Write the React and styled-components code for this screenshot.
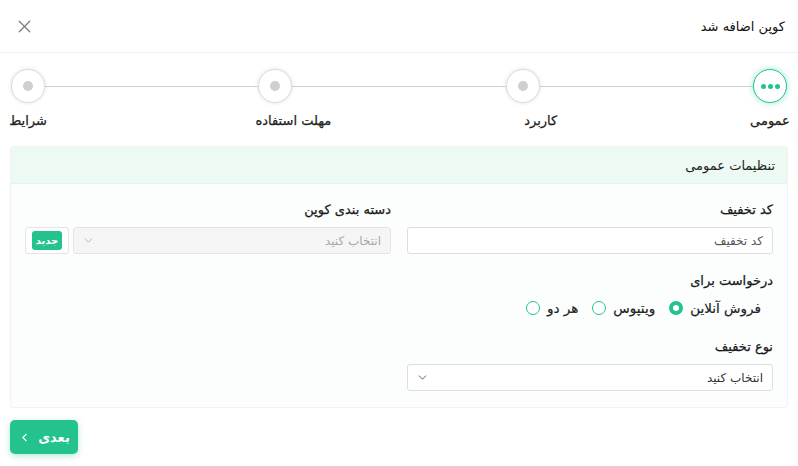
import React from "react";
import styled, { createGlobalStyle, css } from "styled-components";
import { X, ChevronDown, ChevronLeft } from "lucide-react";

const GREEN = "#24c38e";

const GlobalStyle = createGlobalStyle`
  * { box-sizing: border-box; }
  html, body {
    margin: 0;
    background: #fff;
    font-family: "DejaVu Sans", "Noto Sans", sans-serif;
    color: #222;
  }
`;

const Page = styled.div`
  direction: rtl;
  width: 798px;
  height: 466px;
  overflow: hidden;
`;

const Header = styled.header`
  display: flex;
  align-items: center;
  justify-content: space-between;
  height: 53px;
  padding: 0 13px 0 14px;
  border-bottom: 1px solid #f1f1f1;

  h1 {
    margin: 0;
    font-size: 13px;
    font-weight: 400;
    color: #111;
  }

  svg {
    color: #7a7a7a;
  }
`;

const Stepper = styled.div`
  display: flex;
  align-items: flex-start;
  padding: 16px 11px 0 11px;
  height: 93px;
`;

const Step = styled.div`
  display: flex;
  flex-direction: column;
  align-items: center;
  width: 34px;
  flex: none;
`;

const Circle = styled.div`
  width: 34px;
  height: 34px;
  border-radius: 50%;
  background: #fff;
  display: flex;
  align-items: center;
  justify-content: center;
  gap: 2px;
  border: 1px solid #dcdcdc;
  box-shadow: 0 0 4px rgba(0, 0, 0, 0.12);

  ${(p) =>
    p.$active &&
    css`
      border: 1.5px solid ${GREEN};
      box-shadow: 0 0 6px rgba(36, 195, 142, 0.45);
    `}
`;

const Dot = styled.span`
  width: ${(p) => (p.$small ? 5 : 10)}px;
  height: ${(p) => (p.$small ? 5 : 10)}px;
  border-radius: 50%;
  background: ${(p) => (p.$small ? GREEN : "#cfcfcf")};
`;

const StepLabel = styled.span`
  margin-top: 10px;
  white-space: nowrap;
  font-size: 13px;
  font-weight: 400;
  color: #222;
  -webkit-text-stroke: 0.25px #222;
  transform: translateX(${(p) => p.$nudge || 0}px);
`;

const Connector = styled.div`
  flex: 1;
  height: 1px;
  margin-top: 17px;
  background: #cfcfcf;
`;

const Card = styled.section`
  margin: 0 10px;
  border: 1px solid #eef4f1;
  border-radius: 3px;
  background: #fbfefd;
  height: 262px;
`;

const CardHead = styled.div`
  height: 37px;
  display: flex;
  align-items: center;
  padding: 0 12px;
  background: #edfaf4;
  border-bottom: 1px solid #e2f4eb;
  font-size: 13px;
  color: #222;
`;

const CardBody = styled.div`
  display: grid;
  grid-template-columns: 1fr 1fr;
  column-gap: 16px;
  padding: 17px 14px 0 14px;
`;

const Column = styled.div`
  display: flex;
  flex-direction: column;
`;

const Field = styled.div`
  display: flex;
  flex-direction: column;
  margin-bottom: ${(p) => p.$mb || 0}px;
`;

const Label = styled.label`
  font-size: 13px;
  color: #1a1a1a;
  -webkit-text-stroke: 0.25px #1a1a1a;
  margin-bottom: 8px;
  line-height: 18px;
`;

const Input = styled.input`
  height: 27px;
  width: 100%;
  border: 1px solid #dedede;
  border-radius: 3px;
  background: #fff;
  padding: 0 9px;
  font-family: inherit;
  font-size: 12px;
  direction: rtl;
  outline: none;

  &::placeholder {
    color: #555;
  }
`;

const Select = styled.div`
  height: 27px;
  display: flex;
  align-items: center;
  justify-content: space-between;
  padding: 0 9px 0 8px;
  border: 1px solid ${(p) => (p.$disabled ? "#e4e4e4" : "#dedede")};
  border-radius: 3px;
  background: ${(p) => (p.$disabled ? "#f5f5f5" : "#fff")};
  font-size: 12px;
  color: ${(p) => (p.$disabled ? "#a8a8a8" : "#333")};

  svg {
    color: ${(p) => (p.$disabled ? "#aaa" : "#444")};
  }
`;

const SelectGroup = styled.div`
  display: flex;
  gap: 4px;

  & > ${Select} {
    flex: 1;
  }
`;

const AddBox = styled.div`
  width: 44px;
  height: 27px;
  display: flex;
  align-items: center;
  justify-content: center;
  border: 1px solid #e4e4e4;
  border-radius: 3px;
  background: #fff;
`;

const AddButton = styled.button`
  border: none;
  border-radius: 3px;
  background: ${GREEN};
  color: #fff;
  font-family: inherit;
  font-size: 10px;
  font-weight: 700;
  height: 19px;
  width: 30px;
  padding: 0;
`;

const RadioRow = styled.div`
  display: flex;
  gap: 14px;
  padding-right: 12px;
  margin-top: 2px;
`;

const RadioItem = styled.label`
  display: flex;
  align-items: center;
  gap: 7px;
  font-size: 13.5px;
  color: #222;
  -webkit-text-stroke: 0.2px #222;
`;

const RadioMark = styled.span`
  width: 14px;
  height: 14px;
  border-radius: 50%;
  border: ${(p) => (p.$checked ? "4px" : "1.3px")} solid ${GREEN};
  background: #fff;
`;

const Footer = styled.div`
  display: flex;
  justify-content: flex-end;
  padding: 12px 10px 0 10px;
`;

const NextButton = styled.button`
  direction: ltr;
  display: flex;
  align-items: center;
  gap: 7px;
  height: 34px;
  width: 68px;
  justify-content: center;
  border: none;
  border-radius: 5px;
  background: ${GREEN};
  color: #fff;
  font-family: inherit;
  font-size: 13px;
  font-weight: 700;
  box-shadow: 0 2px 6px rgba(36, 195, 142, 0.35);
`;

const steps = [
  { label: "عمومی", active: true },
  { label: "کاربرد", nudge: 18 },
  { label: "مهلت استفاده", nudge: 18 },
  { label: "شرایط" },
];

const radios = [
  { label: "فروش آنلاین", checked: true },
  { label: "ویتپوس" },
  { label: "هر دو" },
];

export default function App() {
  return (
    <Page>
      <GlobalStyle />
      <Header>
        <h1>کوپن اضافه شد</h1>
        <X size={21} strokeWidth={1.4} />
      </Header>

      <Stepper>
        {steps.map((s, i) => (
          <React.Fragment key={s.label}>
            {i > 0 && <Connector />}
            <Step>
              <Circle $active={s.active}>
                {s.active ? (
                  <>
                    <Dot $small />
                    <Dot $small />
                    <Dot $small />
                  </>
                ) : (
                  <Dot />
                )}
              </Circle>
              <StepLabel $nudge={s.nudge}>{s.label}</StepLabel>
            </Step>
          </React.Fragment>
        ))}
      </Stepper>

      <Card>
        <CardHead>تنظیمات عمومی</CardHead>
        <CardBody>
          <Column>
            <Field $mb={18}>
              <Label>کد تخفیف</Label>
              <Input placeholder="کد تخفیف" />
            </Field>
            <Field $mb={22}>
              <Label>درخواست برای</Label>
              <RadioRow>
                {radios.map((r) => (
                  <RadioItem key={r.label}>
                    {r.label}
                    <RadioMark $checked={r.checked} />
                  </RadioItem>
                ))}
              </RadioRow>
            </Field>
            <Field>
              <Label>نوع تخفیف</Label>
              <Select>
                <span>انتخاب کنید</span>
                <ChevronDown size={13} strokeWidth={1.6} />
              </Select>
            </Field>
          </Column>
          <Column>
            <Field>
              <Label>دسته بندی کوپن</Label>
              <SelectGroup>
                <Select $disabled>
                  <span>انتخاب کنید</span>
                  <ChevronDown size={13} strokeWidth={1.6} />
                </Select>
                <AddBox>
                  <AddButton>جدید</AddButton>
                </AddBox>
              </SelectGroup>
            </Field>
          </Column>
        </CardBody>
      </Card>

      <Footer>
        <NextButton>
          <ChevronLeft size={13} strokeWidth={2} />
          <span>بعدی</span>
        </NextButton>
      </Footer>
    </Page>
  );
}
